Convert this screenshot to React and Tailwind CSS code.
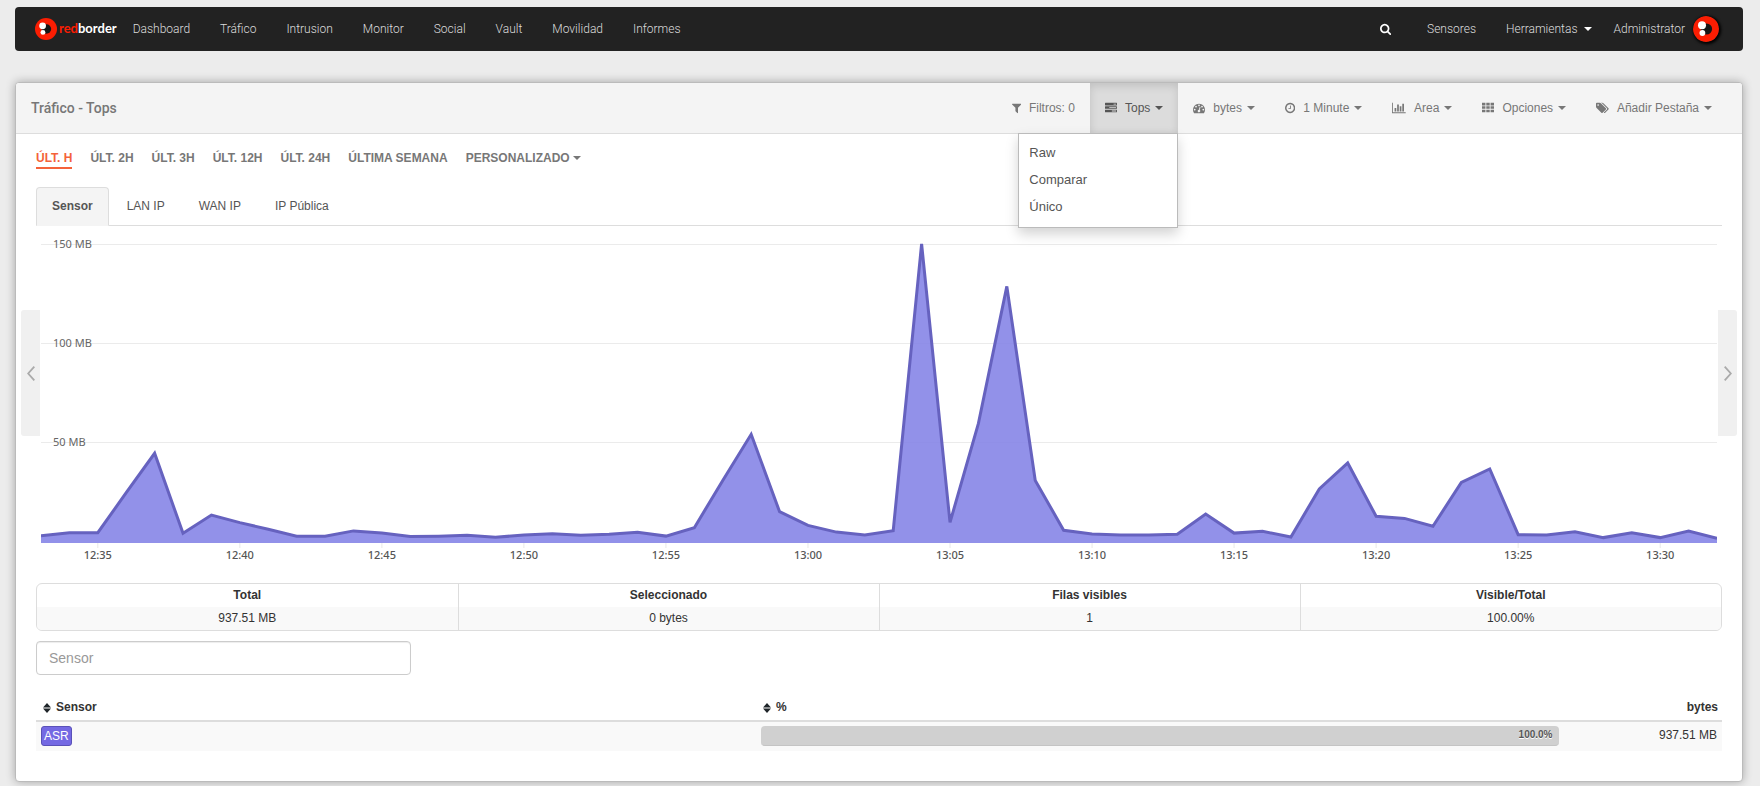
import { useState } from 'react';

const NAV_LINKS = ['Dashboard', 'Tráfico', 'Intrusion', 'Monitor', 'Social', 'Vault', 'Movilidad', 'Informes'];
const RANGES = ['ÚLT. H', 'ÚLT. 2H', 'ÚLT. 3H', 'ÚLT. 12H', 'ÚLT. 24H', 'ÚLTIMA SEMANA'];
const TABS = ['Sensor', 'LAN IP', 'WAN IP', 'IP Pública'];
const TOPS_MENU = ['Raw', 'Comparar', 'Único'];

const SUMMARY = [
  { label: 'Total', value: '937.51 MB' },
  { label: 'Seleccionado', value: '0 bytes' },
  { label: 'Filas visibles', value: '1' },
  { label: 'Visible/Total', value: '100.00%' },
];

const ROWS = [{ sensor: 'ASR', percent: 100, bytes: '937.51 MB' }];

// MB per minute, 12:33 → 13:32
const TRAFFIC = [
  2.7, 4.2, 4.2, 24.4, 44.3, 3.9, 13.1, 9.3, 5.9, 2.4, 2.4, 5.1, 4, 2.2, 2.4,
  2.9, 1.9, 3, 3.7, 2.9, 3.4, 4.4, 2.5, 6.7, 30.6, 53.9, 14.8, 7.9, 4.5, 3,
  5.2, 150, 9.4, 59.4, 128.6, 30.6, 5.4, 3.5, 3, 3, 3.4, 13.6, 4, 4.9, 2,
  26.3, 39.4, 12.5, 11.4, 7.4, 29.6, 36.4, 3.2, 3, 4.7, 1.7, 4.2, 1.7, 5, 1.3,
];
const TIME_TICKS = ['12:35', '12:40', '12:45', '12:50', '12:55', '13:00', '13:05', '13:10', '13:15', '13:20', '13:25', '13:30'];

// Glyphs on the 1792-unit em grid
const ICONS = {
  filter: {
    w: 1408,
    x: 192,
    d: 'M1595 295q17 41-14 70l-493 493v742q0 42-39 59-13 5-25 5-27 0-45-19l-256-256q-19-19-19-45v-486l-493-493q-31-29-14-70 17-39 59-39h1280q42 0 59 39z',
  },
  tasks: {
    w: 1792,
    d: 'M1024 1408h640v-128h-640v128zm-384-512h1024v-128h-1024v128zm640-512h384v-128h-384v128zm512 832v256q0 26-19 45t-45 19h-1664q-26 0-45-19t-19-45v-256q0-26 19-45t45-19h1664q26 0 45 19t19 45zm0-512v256q0 26-19 45t-45 19h-1664q-26 0-45-19t-19-45v-256q0-26 19-45t45-19h1664q26 0 45 19t19 45zm0-512v256q0 26-19 45t-45 19h-1664q-26 0-45-19t-19-45v-256q0-26 19-45t45-19h1664q26 0 45 19t19 45z',
  },
  gauge: {
    w: 1792,
    d: 'M384 1152q0-53-37.5-90.5t-90.5-37.5-90.5 37.5-37.5 90.5 37.5 90.5 90.5 37.5 90.5-37.5 37.5-90.5zm192-448q0-53-37.5-90.5t-90.5-37.5-90.5 37.5-37.5 90.5 37.5 90.5 90.5 37.5 90.5-37.5 37.5-90.5zm428 481l101-382q6-26-7.5-48.5t-38.5-29.5-48 6.5-30 39.5l-101 382q-60 5-107 43.5t-63 98.5q-20 77 20 146t117 89 146-20 89-117q16-60-6-117t-72-91zm660-33q0-53-37.5-90.5t-90.5-37.5-90.5 37.5-37.5 90.5 37.5 90.5 90.5 37.5 90.5-37.5 37.5-90.5zm-640-640q0-53-37.5-90.5t-90.5-37.5-90.5 37.5-37.5 90.5 37.5 90.5 90.5 37.5 90.5-37.5 37.5-90.5zm448 192q0-53-37.5-90.5t-90.5-37.5-90.5 37.5-37.5 90.5 37.5 90.5 90.5 37.5 90.5-37.5 37.5-90.5zm320 448q0 261-141 483-19 29-54 29h-1402q-35 0-54-29-141-221-141-483 0-182 71-348t191-286 286-191 348-71 348 71 286 191 191 286 71 348z',
  },
  clock: {
    w: 1536,
    x: 128,
    d: 'M1024 544v448q0 14-9 23t-23 9h-320q-14 0-23-9t-9-23v-64q0-14 9-23t23-9h224v-352q0-14 9-23t23-9h64q14 0 23 9t9 23zm416 352q0-148-73-273t-198-198-273-73-273 73-198 198-73 273 73 273 198 198 273 73 273-73 198-198 73-273zm224 0q0 209-103 385.5t-279.5 279.5-385.5 103-385.5-103-279.5-279.5-103-385.5 103-385.5 279.5-279.5 385.5-103 385.5 103 279.5 279.5 103 385.5z',
  },
  bars: {
    w: 2048,
    d: 'M640 896v512h-256v-512h256zm384-512v1024h-256v-1024h256zm1024 1152v128h-2048v-1536h128v1408h1920zm-640-896v768h-256v-768h256zm384-384v1152h-256v-1152h256z',
  },
  grid: {
    w: 1792,
    d: 'M0 128h512v384h-512zM640 128h512v384h-512zM1280 128h512v384h-512zM0 640h512v384h-512zM640 640h512v384h-512zM1280 640h512v384h-512zM0 1152h512v384h-512zM640 1152h512v384h-512zM1280 1152h512v384h-512z',
  },
  tags: {
    w: 1920,
    d: 'M448 448q0-53-37.5-90.5t-90.5-37.5-90.5 37.5-37.5 90.5 37.5 90.5 90.5 37.5 90.5-37.5 37.5-90.5zm1067 576q0 53-37 90l-491 492q-39 37-91 37-53 0-90-37l-715-716q-38-37-64.5-101t-26.5-117v-416q0-52 38-90t90-38h416q53 0 117 26.5t102 64.5l715 714q37 39 37 91zm384 0q0 53-37 90l-491 492q-39 37-91 37-36 0-59-14t-53-45l470-470q37-37 37-90 0-52-37-91l-715-714q-38-38-102-64.5t-117-26.5h224q53 0 117 26.5t102 64.5l715 714q37 39 37 91z',
  },
  search: {
    w: 1664,
    x: 64,
    d: 'M1216 832q0-185-131.5-316.5t-316.5-131.5-316.5 131.5-131.5 316.5 131.5 316.5 316.5 131.5 316.5-131.5 131.5-316.5zm512 832q0 52-38 90t-90 38q-54 0-90-38l-343-342q-179 124-399 124-143 0-273.5-55.5t-225-150-150-225-55.5-273.5 55.5-273.5 150-225 225-150 273.5-55.5 273.5 55.5 225 150 150 225 55.5 273.5q0 220-124 399l343 343q37 37 37 90z',
  },
};

function Icon({ name }) {
  const { w, x = 0, d } = ICONS[name];
  return (
    <svg viewBox={`${x} 0 ${w} 1792`} className="h-3 w-auto shrink-0" fill="currentColor" aria-hidden="true">
      <path d={d} />
    </svg>
  );
}

function Caret() {
  return <span className="inline-block border-x-4 border-t-4 border-x-transparent border-t-current" />;
}

function SortIcon() {
  return (
    <svg viewBox="0 0 8 10" className="h-2.5 w-2 shrink-0" fill="#1f2529" aria-hidden="true">
      <path d="M4 0l4 4.4H0zM4 10L0 5.6h8z" />
    </svg>
  );
}

function LogoMark({ className }) {
  return (
    <svg viewBox="0 0 26 26" className={className} aria-hidden="true">
      <circle cx="13" cy="13" r="13" fill="#fb1d02" />
      <circle cx="13.5" cy="13" r="5.6" fill="#161616" />
      <circle cx="9" cy="9.3" r="4" fill="#fff" />
      <circle cx="9.4" cy="17" r="2.9" fill="#fff" />
    </svg>
  );
}

function Navbar() {
  return (
    <nav className="flex h-11 items-center rounded bg-[#222] pl-5 pr-6 font-['Roboto',sans-serif] text-[12px] font-light text-[#ddd]">
      <a href="#home" className="mr-4 flex items-center gap-0.5">
        <LogoMark className="size-[22px]" />
        <span className="font-['Lato',sans-serif] text-[13px] font-bold text-white">
          <span className="text-[#fb1d02]">red</span>border
        </span>
      </a>
      <div className="flex gap-[30px]">
        {NAV_LINKS.map((l) => <a key={l} href={`#${l.toLowerCase()}`}>{l}</a>)}
      </div>
      <div className="ml-auto flex items-center">
        <button aria-label="Buscar" className="mr-9 text-white"><Icon name="search" /></button>
        <a href="#sensores" className="mr-[30px]">Sensores</a>
        <button className="mr-[22px] flex items-center gap-1.5">
          Herramientas <span className="flex text-white"><Caret /></span>
        </button>
        <a href="#perfil" className="flex items-center gap-2">
          Administrator
          <LogoMark className="size-[26px] rounded-full shadow-[1px_1px_3px_1px_#000]" />
        </a>
      </div>
    </nav>
  );
}

function ToolButton({ icon, label, caret = true, active = false, ...rest }) {
  return (
    <button
      className={`flex h-full items-center gap-2 px-[15px] ${active ? 'bg-[#dcdcdc] text-[#555] shadow-[inset_0_3px_8px_rgba(0,0,0,0.125)]' : ''}`}
      {...rest}
    >
      <Icon name={icon} />
      <span className="flex items-center gap-[5px]">{label} {caret && <Caret />}</span>
    </button>
  );
}

function TopsMenu() {
  const [open, setOpen] = useState(true);
  return (
    <div className="relative h-full">
      <ToolButton icon="tasks" label="Tops" active={open} aria-expanded={open} onClick={() => setOpen(!open)} />
      {open && (
        <ul className="absolute right-0 top-full z-10 w-40 border border-[#bbb] bg-white pb-[7px] pt-[5px] text-[13px] text-[#555] shadow-[0_6px_12px_rgba(0,0,0,0.175)]">
          {TOPS_MENU.map((m) => (
            <li key={m}>
              <button className="block w-full px-2.5 text-left leading-[27px]">{m}</button>
            </li>
          ))}
        </ul>
      )}
    </div>
  );
}

function PanelHeader() {
  return (
    <header className="flex h-[51px] items-center justify-between rounded-t-[3px] border-b border-[#ddd] bg-[#f4f4f4] px-[15px] text-[#777]">
      <h1 className="font-['Roboto',sans-serif] text-[14px] font-medium">Tráfico - Tops</h1>
      <div className="flex h-full items-center text-[12px]">
        <ToolButton icon="filter" label="Filtros: 0" caret={false} />
        <TopsMenu />
        <ToolButton icon="gauge" label="bytes" />
        <ToolButton icon="clock" label="1 Minute" />
        <ToolButton icon="bars" label="Area" />
        <ToolButton icon="grid" label="Opciones" />
        <ToolButton icon="tags" label="Añadir Pestaña" />
      </div>
    </header>
  );
}

function RangePicker() {
  const [range, setRange] = useState(RANGES[0]);
  return (
    <div className="flex gap-[18px] pl-5 pt-[15px] text-[12px] font-bold leading-[18px] text-[#777]">
      {RANGES.map((r) => (
        <button
          key={r}
          onClick={() => setRange(r)}
          className={`border-b-2 ${r === range ? 'border-[#f4623a] text-[#f4623a]' : 'border-transparent'}`}
        >
          {r}
        </button>
      ))}
      <button className="flex items-center gap-[3px] border-b-2 border-transparent">PERSONALIZADO <Caret /></button>
    </div>
  );
}

function Tabs() {
  const [tab, setTab] = useState(TABS[0]);
  return (
    <div role="tablist" className="mx-5 mt-[18px] flex gap-0.5 border-b border-[#ddd] text-[12px] leading-[17px] text-[#555]">
      {TABS.map((t) => (
        <button
          key={t}
          role="tab"
          aria-selected={t === tab}
          onClick={() => setTab(t)}
          className={`-mb-px rounded-t border px-[15px] py-2.5 ${
            t === tab ? 'border-[#ddd] border-b-[#f4f4f4] bg-[#f4f4f4] font-bold' : 'border-transparent'
          }`}
        >
          {t}
        </button>
      ))}
    </div>
  );
}

const BASE = 317; // bottom edge of the filled area
const ZERO = 315;
const SCALE = 1.98; // pixels per MB

function TrafficChart() {
  const last = TRAFFIC.length - 1;
  const line = TRAFFIC.map((v, i) => `${i},${(ZERO - v * SCALE).toFixed(1)}`).join(' ');
  const levels = [150, 100, 50].map((v) => ({ v, y: ZERO - v * SCALE }));
  return (
    <svg className="h-[341px] min-w-0 flex-1 font-['Noto_Sans',sans-serif] text-[11px]" role="img" aria-label="Tráfico por minuto">
      {levels.map(({ v, y }) => (
        <line key={v} x2="100%" y1={y + 0.5} y2={y + 0.5} stroke="#ebebeb" />
      ))}
      <svg width="100%" height={BASE} viewBox={`0 0 ${last} ${BASE}`} preserveAspectRatio="none">
        <polygon points={`0,${BASE} ${line} ${last},${BASE}`} fill="#8685e7" fillOpacity="0.9" />
        <polyline points={line} fill="none" stroke="#6662bf" strokeWidth="3" vectorEffect="non-scaling-stroke" />
      </svg>
      {levels.map(({ v, y }) => (
        <text key={v} x="12" y={y + 4} fill="#666">{v} MB</text>
      ))}
      {TIME_TICKS.map((t, i) => {
        const x = `${((2 + i * 5) / last) * 100}%`;
        return (
          <g key={t}>
            <line x1={x} x2={x} y1={BASE} y2={BASE + 5} stroke="#e8e8e8" />
            <text x={x} y={BASE + 16} textAnchor="middle" fill="#555" className="font-medium">{t}</text>
          </g>
        );
      })}
    </svg>
  );
}

function PageButton({ dir }) {
  const prev = dir === 'prev';
  return (
    <button
      aria-label={prev ? 'Anterior' : 'Siguiente'}
      className={`mt-[84px] flex h-[126px] w-[19px] items-center justify-center bg-[#f0f0f0] ${prev ? 'rounded-l-[3px]' : 'rounded-r-[3px]'}`}
    >
      <svg viewBox="0 0 8 15" className="h-[15px] w-2" fill="none" stroke="#aaa" strokeWidth="1.8" aria-hidden="true">
        <path d={prev ? 'M7.3 .6L1.2 7.5l6.1 6.9' : 'M.7 .6l6.1 6.9-6.1 6.9'} />
      </svg>
    </button>
  );
}

function Summary() {
  return (
    <div className="mx-5 mt-4 overflow-hidden rounded-[6px] border border-[#ddd]">
      <table className="w-full table-fixed text-center text-[12px] leading-[17px] text-[#333]">
        <thead>
          <tr className="divide-x divide-[#ddd]">
            {SUMMARY.map((s) => <th key={s.label} className="py-[3px]">{s.label}</th>)}
          </tr>
        </thead>
        <tbody>
          <tr className="divide-x divide-[#ddd] bg-[#f9f9f9]">
            {SUMMARY.map((s) => <td key={s.label} className="py-[3px]">{s.value}</td>)}
          </tr>
        </tbody>
      </table>
    </div>
  );
}

function SensorTable() {
  return (
    <table className="w-full table-fixed text-[12px] leading-[17px] text-[#333]">
      <thead>
        <tr className="border-b-2 border-[#ddd] text-left">
          <th className="w-[42.7%] px-[7px] pb-1 pt-2">
            <button className="flex items-center gap-[5px] font-bold"><SortIcon /> Sensor</button>
          </th>
          <th className="w-[47.9%] px-[7px] pb-1 pt-2">
            <button className="flex items-center gap-[5px] font-bold"><SortIcon /> %</button>
          </th>
          <th className="px-1 pb-1 pt-2 text-right">bytes</th>
        </tr>
      </thead>
      <tbody>
        {ROWS.map((r) => (
          <tr key={r.sensor} className="h-[30px] bg-[#f9f9f9] align-top">
            <td className="px-[5px] pt-1">
              <a href="#asr" className="block w-fit rounded-[3px] border border-[#5a51b8] bg-[#7469e3] px-0.5 leading-[18px] text-white">
                {r.sensor}
              </a>
            </td>
            <td className="px-[5px] pt-1">
              <div
                className="h-5 rounded border-b border-[#c4c4c4] bg-[#d0d0d0] pr-1.5 text-right text-[10px] font-bold leading-[18px] text-[#555] [text-shadow:0_1px_0_#fff]"
                style={{ width: `${r.percent}%` }}
              >
                {r.percent.toFixed(1)}%
              </div>
            </td>
            <td className="px-[5px] pt-[5px] text-right">{r.bytes}</td>
          </tr>
        ))}
      </tbody>
    </table>
  );
}

export default function App() {
  return (
    <div className="min-h-screen bg-[#ececec] pb-[3px] pl-[15px] pr-[17px] pt-[7px] font-['Liberation_Sans',Arial,sans-serif]">
      <Navbar />
      <main className="mt-[31px] rounded border border-[#bbb] bg-white pb-[30px] shadow-[0_0_10px_rgba(0,0,0,0.3)]">
        <PanelHeader />
        <RangePicker />
        <Tabs />
        <div className="flex items-start gap-px px-[5px]">
          <PageButton dir="prev" />
          <TrafficChart />
          <PageButton dir="next" />
        </div>
        <Summary />
        <div className="px-5 pt-2.5">
          <input
            type="text"
            aria-label="Sensor"
            placeholder="Sensor"
            className="mb-4 block h-[34px] w-[375px] rounded border border-[#ccc] bg-white px-3 text-[14px] text-[#555] shadow-[inset_0_1px_1px_rgba(0,0,0,0.075)] placeholder:text-[#999]"
          />
          <SensorTable />
        </div>
      </main>
    </div>
  );
}
